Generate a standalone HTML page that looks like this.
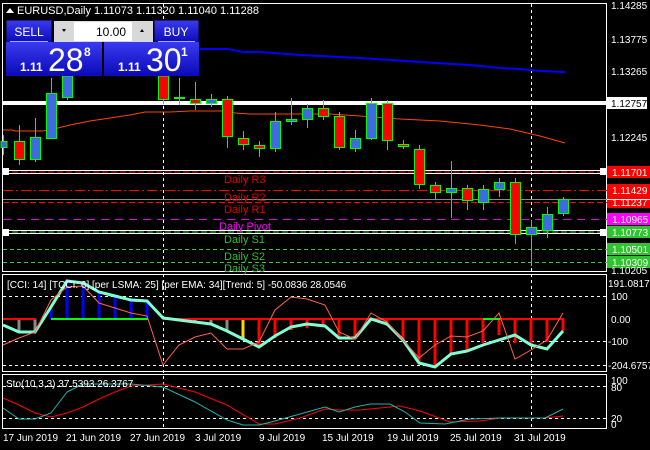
<!DOCTYPE html>
<html><head><meta charset="utf-8"><style>
html,body{margin:0;padding:0;background:#000;width:650px;height:450px;overflow:hidden}
svg{display:block;font-family:"Liberation Sans",sans-serif}
</style></head><body>
<svg width="650" height="450" viewBox="0 0 650 450">
<defs>
<linearGradient id="bg1" x1="0" y1="0" x2="0" y2="1"><stop offset="0" stop-color="#3a3af0"/><stop offset="1" stop-color="#0a0ab8"/></linearGradient>
</defs>
<rect width="650" height="450" fill="#000"/>
<!-- panel borders -->
<rect x="2.5" y="3.5" width="604" height="268" fill="none" stroke="#fff"/>
<rect x="2.5" y="274.5" width="604" height="97" fill="none" stroke="#fff"/>
<rect x="2.5" y="374.5" width="604" height="54" fill="none" stroke="#fff"/>
<!-- vertical dashed -->
<line x1="163.5" y1="4" x2="163.5" y2="430" stroke="#fff" stroke-dasharray="3,3"/>
<line x1="531.5" y1="4" x2="531.5" y2="430" stroke="#fff" stroke-dasharray="3,3"/>
<!-- MAs -->
<polyline fill="none" stroke="#0000ff" stroke-width="2" points="200,49 228,49 243,52 260,52 300,55 360,58 420,62 470,65 500,68 520,69 540,71 565,72"/>
<polyline fill="none" stroke="#ff4500" stroke-width="1" points="3,130 12,130 15,131 43,131 58,128 70,125 90,121 110,118 130,115 145,112 170,112 190,111 215,111 225,111 235,113 250,114 300,114 330,114 360,116 400,119 440,121 480,125 510,129 540,136 565,143"/>
<!-- horizontal levels -->
<rect x="3" y="101" width="604" height="4" fill="#fff"/>
<line x1="3" y1="170.5" x2="607" y2="170.5" stroke="#fff"/>
<line x1="3" y1="172" x2="607" y2="172" stroke="#f00" stroke-dasharray="6,3"/>
<line x1="3" y1="173.5" x2="607" y2="173.5" stroke="#fff"/>
<line x1="3" y1="190.5" x2="607" y2="190.5" stroke="#f00" stroke-dasharray="10,3,2,3"/>
<line x1="3" y1="199.5" x2="607" y2="199.5" stroke="#8a8a8a"/>
<line x1="3" y1="202.5" x2="607" y2="202.5" stroke="#f00" stroke-dasharray="6,3"/>
<line x1="3" y1="219.5" x2="607" y2="219.5" stroke="#e000e0" stroke-dasharray="8,6"/>
<line x1="3" y1="230.5" x2="607" y2="230.5" stroke="#fff"/>
<line x1="3" y1="232" x2="607" y2="232" stroke="#33cc33" stroke-dasharray="6,3"/>
<line x1="3" y1="233.5" x2="607" y2="233.5" stroke="#fff"/>
<line x1="3" y1="249.5" x2="607" y2="249.5" stroke="#33cc33" stroke-dasharray="4,3"/>
<line x1="3" y1="262.5" x2="607" y2="262.5" stroke="#33cc33" stroke-dasharray="4,3"/>
<rect x="2" y="168" width="7" height="7" fill="#fff"/>
<rect x="2" y="229" width="7" height="7" fill="#fff"/>
<rect x="600" y="168" width="7" height="7" fill="#fff"/>
<rect x="600" y="229" width="7" height="7" fill="#fff"/>
<g font-size="11">
<text x="224" y="183" fill="#e00000">Daily R3</text>
<text x="224" y="201" fill="#e00000">Daily R2</text>
<text x="224" y="213" fill="#e00000">Daily R1</text>
<text x="219" y="230" fill="#ff00ff">Daily Pivot</text>
<text x="224" y="243" fill="#33bb33">Daily S1</text>
<text x="224" y="260" fill="#33bb33">Daily S2</text>
<text x="224" y="272" fill="#33bb33">Daily S3</text>
</g>
<!-- candles -->
<g stroke="#00ff00" stroke-width="1">
<line x1="3.5" y1="135" x2="3.5" y2="155"/><rect x="1" y="141.5" width="6" height="6" fill="#4169e1"/>
<line x1="19.5" y1="125" x2="19.5" y2="165"/><rect x="14.5" y="141.5" width="10" height="18" fill="#f00"/>
<line x1="35.5" y1="118" x2="35.5" y2="162"/><rect x="30.5" y="137.5" width="10" height="22" fill="#4169e1"/>
<line x1="51.5" y1="78" x2="51.5" y2="138"/><rect x="46.5" y="93.5" width="10" height="45" fill="#4169e1"/>
<line x1="67.5" y1="76" x2="67.5" y2="100"/><rect x="62.5" y="76" width="10" height="21.5" fill="#4169e1"/>
<line x1="163.5" y1="76" x2="163.5" y2="104"/><rect x="158.5" y="76" width="10" height="23.5" fill="#f00"/>
<line x1="179.5" y1="78" x2="179.5" y2="105"/><rect x="174.5" y="97.5" width="10" height="1" fill="#0f0"/>
<line x1="195.5" y1="82" x2="195.5" y2="110"/><rect x="190.5" y="99.5" width="10" height="4" fill="#f00"/>
<line x1="211.5" y1="94" x2="211.5" y2="107"/><rect x="206.5" y="99.5" width="10" height="4" fill="#4169e1"/>
<line x1="227.5" y1="96" x2="227.5" y2="148"/><rect x="222.5" y="99.5" width="10" height="37" fill="#f00"/>
<line x1="243.5" y1="131" x2="243.5" y2="150"/><rect x="238.5" y="138.5" width="10" height="6" fill="#f00"/>
<line x1="259.5" y1="141" x2="259.5" y2="157"/><rect x="254.5" y="145.5" width="10" height="3" fill="#f00"/>
<line x1="275.5" y1="112" x2="275.5" y2="152"/><rect x="270.5" y="121.5" width="10" height="27" fill="#4169e1"/>
<line x1="291.5" y1="98" x2="291.5" y2="125"/><rect x="286.5" y="119.5" width="10" height="2" fill="#4169e1"/>
<line x1="307.5" y1="104" x2="307.5" y2="128"/><rect x="302.5" y="108.5" width="10" height="11" fill="#4169e1"/>
<line x1="323.5" y1="100" x2="323.5" y2="120"/><rect x="318.5" y="108.5" width="10" height="8" fill="#f00"/>
<line x1="339.5" y1="112" x2="339.5" y2="150"/><rect x="334.5" y="116.5" width="10" height="31" fill="#f00"/>
<line x1="355.5" y1="130" x2="355.5" y2="152"/><rect x="350.5" y="138.5" width="10" height="10" fill="#4169e1"/>
<line x1="371.5" y1="98" x2="371.5" y2="140"/><rect x="366.5" y="103.5" width="10" height="35" fill="#4169e1"/>
<line x1="387.5" y1="100" x2="387.5" y2="150"/><rect x="382.5" y="103.5" width="10" height="37" fill="#f00"/>
<line x1="403.5" y1="140" x2="403.5" y2="149"/><rect x="398.5" y="144.5" width="10" height="2" fill="#f00"/>
<line x1="419.5" y1="145" x2="419.5" y2="189"/><rect x="414.5" y="149.5" width="10" height="35" fill="#f00"/>
<line x1="435.5" y1="182" x2="435.5" y2="200"/><rect x="430.5" y="185.5" width="10" height="7" fill="#f00"/>
<line x1="451.5" y1="161" x2="451.5" y2="218"/><rect x="446.5" y="188.5" width="10" height="4" fill="#4169e1"/>
<line x1="467.5" y1="185" x2="467.5" y2="210"/><rect x="462.5" y="188.5" width="10" height="12" fill="#f00"/>
<line x1="483.5" y1="185" x2="483.5" y2="210"/><rect x="478.5" y="189.5" width="10" height="13" fill="#4169e1"/>
<line x1="499.5" y1="178" x2="499.5" y2="197"/><rect x="494.5" y="182.5" width="10" height="7" fill="#4169e1"/>
<line x1="515.5" y1="178" x2="515.5" y2="244"/><rect x="510.5" y="182.5" width="10" height="52" fill="#f00"/>
<line x1="531.5" y1="220" x2="531.5" y2="266"/><rect x="526.5" y="227.5" width="10" height="7" fill="#4169e1"/>
<line x1="547.5" y1="207" x2="547.5" y2="238"/><rect x="542.5" y="214.5" width="10" height="16" fill="#4169e1"/>
<line x1="563.5" y1="197" x2="563.5" y2="216"/><rect x="558.5" y="199.5" width="10" height="14" fill="#4169e1"/>
</g>
<!-- header -->
<polygon points="6,13 10,8 14,13" fill="#fff"/>
<text x="17" y="14" fill="#fff" font-size="11">EURUSD,Daily  1.11073 1.11320 1.11040 1.11288</text>
<!-- trade panel -->
<rect x="6" y="20" width="46" height="23" fill="url(#bg1)" stroke="#000"/>
<text x="29" y="36" fill="#fff" font-size="12" text-anchor="middle">SELL</text>
<line x1="10" y1="41.5" x2="48" y2="41.5" stroke="#aaf"/>
<rect x="54" y="21" width="99" height="21" fill="#d8d8d8"/>
<rect x="74" y="22" width="58" height="19" fill="#fff"/>
<polygon points="62,29 66,29 64,32" fill="#000"/><polygon points="140,32 144,32 142,29" fill="#000"/>
<text x="126" y="36" fill="#000" font-size="12" text-anchor="end">10.00</text>
<rect x="154" y="20" width="45" height="23" fill="url(#bg1)" stroke="#000"/>
<text x="176" y="36" fill="#fff" font-size="12" text-anchor="middle">BUY</text>
<line x1="158" y1="41.5" x2="195" y2="41.5" stroke="#aaf"/>
<rect x="6" y="42" width="96" height="34" fill="url(#bg1)"/>
<rect x="104" y="42" width="95" height="34" fill="url(#bg1)"/>
<text x="20" y="71" fill="#fff" font-size="12" font-weight="bold">1.11</text>
<text x="48" y="71" fill="#fff" font-size="32">28</text>
<text x="84" y="56" fill="#fff" font-size="12" font-weight="bold">8</text>
<text x="118" y="71" fill="#fff" font-size="12" font-weight="bold">1.11</text>
<text x="146" y="71" fill="#fff" font-size="32">30</text>
<text x="181" y="56" fill="#fff" font-size="12" font-weight="bold">1</text>
<!-- right axis -->
<g font-size="10" fill="#fff">
<text x="611" y="9">1.14285</text>
<text x="611" y="43">1.13775</text>
<text x="611" y="75">1.13265</text>
<rect x="607" y="97" width="40" height="12" fill="#fff"/><text x="611" y="107" fill="#000">1.12757</text>
<text x="611" y="141">1.12245</text>
<rect x="607" y="166" width="43" height="12" fill="#f00"/><text x="612" y="176">1.11701</text>
<rect x="607" y="184" width="43" height="12" fill="#f00"/><text x="612" y="194">1.11429</text>
<rect x="607" y="196" width="43" height="12" fill="#f00"/><text x="612" y="206">1.11237</text>
<line x1="607" y1="199.5" x2="650" y2="199.5" stroke="#fff"/>
<rect x="607" y="213" width="43" height="12" fill="#f0f"/><text x="612" y="223">1.10965</text>
<rect x="607" y="226" width="43" height="12" fill="#2ec42e"/><text x="612" y="236">1.10773</text>
<rect x="607" y="243" width="43" height="12" fill="#2ec42e"/><text x="612" y="253">1.10501</text>
<rect x="607" y="256" width="43" height="12" fill="#2ec42e"/><text x="612" y="266">1.10309</text>
<text x="611" y="274">1.10205</text>
<text x="608" y="287">191.0817</text>
<text x="611" y="300">100</text>
<text x="611" y="323">0.00</text>
<text x="608" y="345">-100</text>
<text x="608" y="369">-204.6757</text>
<text x="611" y="384">100</text>
<text x="611" y="391">80</text>
<text x="611" y="422">20</text>
<text x="611" y="428">0</text>
</g>
<!-- CCI panel -->
<g stroke="#fff" stroke-dasharray="3,3">
<line x1="3" y1="296.5" x2="606" y2="296.5"/><line x1="3" y1="341.5" x2="606" y2="341.5"/><line x1="3" y1="365.5" x2="606" y2="365.5"/>
<line x1="3" y1="386.5" x2="606" y2="386.5"/><line x1="3" y1="418.5" x2="606" y2="418.5"/>
</g>
<g stroke-width="3">
<line x1="19" y1="319" x2="19" y2="332" stroke="#888"/><line x1="35" y1="319" x2="35" y2="332" stroke="#888"/>
<line x1="51" y1="319" x2="51" y2="309" stroke="#00f"/>
<line x1="67" y1="319" x2="67" y2="281" stroke="#00f"/><line x1="83" y1="319" x2="83" y2="282" stroke="#00f"/>
<line x1="99" y1="319" x2="99" y2="291" stroke="#00f"/><line x1="115" y1="319" x2="115" y2="296" stroke="#00f"/>
<line x1="131" y1="319" x2="131" y2="300" stroke="#00f"/><line x1="147" y1="319" x2="147" y2="301" stroke="#00f"/>
<line x1="195" y1="319" x2="195" y2="323" stroke="#888"/><line x1="211" y1="319" x2="211" y2="325" stroke="#888"/>
<line x1="227" y1="319" x2="227" y2="331" stroke="#888"/>
<line x1="243" y1="319" x2="243" y2="340" stroke="#ffd700"/>
<g stroke="#f00">
<line x1="259" y1="319" x2="259" y2="348"/><line x1="275" y1="319" x2="275" y2="338"/><line x1="291" y1="319" x2="291" y2="330"/>
<line x1="307" y1="319" x2="307" y2="328"/><line x1="323" y1="319" x2="323" y2="327"/><line x1="339" y1="319" x2="339" y2="338"/>
<line x1="355" y1="319" x2="355" y2="338"/><line x1="387" y1="319" x2="387" y2="326"/><line x1="403" y1="319" x2="403" y2="340"/>
<line x1="419" y1="319" x2="419" y2="363"/><line x1="435" y1="319" x2="435" y2="367"/><line x1="451" y1="319" x2="451" y2="354"/>
<line x1="467" y1="319" x2="467" y2="351"/><line x1="483" y1="319" x2="483" y2="343"/><line x1="499" y1="319" x2="499" y2="335"/>
<line x1="515" y1="319" x2="515" y2="343"/><line x1="531" y1="319" x2="531" y2="346"/><line x1="547" y1="319" x2="547" y2="342"/>
<line x1="563" y1="319" x2="563" y2="331"/>
</g>
</g>
<line x1="3" y1="319" x2="36" y2="319" stroke="#f00" stroke-width="2"/>
<line x1="51" y1="319" x2="148" y2="319" stroke="#00ff00" stroke-width="2"/>
<line x1="163" y1="319" x2="564" y2="319" stroke="#f00" stroke-width="2"/>
<line x1="483" y1="319" x2="500" y2="319" stroke="#00ff00" stroke-width="2"/>
<polyline fill="none" stroke="#7fffd4" stroke-width="3" points="3,325 19,332 35,332 51,307 67,281 83,283 99,292 115,296 131,300 147,301 163,318 179,320 195,322 211,324 227,331 243,339 259,347 275,336 291,327 307,324 325,326 339,338 355,338 371,319 387,324 403,340 419,363 435,367 451,354 467,351 483,345 499,340 515,335 531,345 547,349 563,331"/>
<polyline fill="none" stroke="#ff6347" stroke-width="1" points="3,345 19,338 35,332 51,300 67,287 83,286 99,303 115,308 131,313 147,316 163,365 179,345 195,337 211,333 227,349 243,349 259,342 275,310 291,297 307,299 325,305 339,332 355,339 371,313 387,322 403,340 419,358 435,345 451,336 467,337 483,331 499,313 515,359 531,350 547,340 563,313"/>
<text x="7" y="288" fill="#fff" font-size="10">[CCI: 14] [TCCI: 6] [per LSMA: 25] [per EMA: 34][Trend: 5]  -50.0836 28.0546</text>
<!-- Sto -->
<polyline fill="none" stroke="#f00" stroke-width="1" points="3,398 19,405 35,413 51,417 67,413 83,407 99,399 115,392 131,386 163,384 195,392 227,405 259,424 275,424 300,418 325,409 340,410 360,410 400,406 420,411 450,422 480,421 500,418 545,418 563,416"/>
<polyline fill="none" stroke="#20b2aa" stroke-width="1" points="3,408 19,419 35,419 51,413 67,392 83,384 99,384 131,384 163,387 195,402 227,420 243,425 259,425 275,421 300,414 325,407 339,412 355,407 370,404 390,404 405,412 420,423 445,424 470,419 500,418 545,418 563,409"/>
<text x="6" y="387" fill="#fff" font-size="10">Sto(10,3,3) 37.5393 26.3767</text>
<!-- dates -->
<g font-size="10" fill="#fff">
<text x="3" y="441">17 Jun 2019</text><text x="66" y="441">21 Jun 2019</text><text x="130" y="441">27 Jun 2019</text>
<text x="195" y="441">3 Jul 2019</text><text x="259" y="441">9 Jul 2019</text><text x="322" y="441">15 Jul 2019</text>
<text x="387" y="441">19 Jul 2019</text><text x="450" y="441">25 Jul 2019</text><text x="514" y="441">31 Jul 2019</text>
</g>
</svg>
</body></html>
